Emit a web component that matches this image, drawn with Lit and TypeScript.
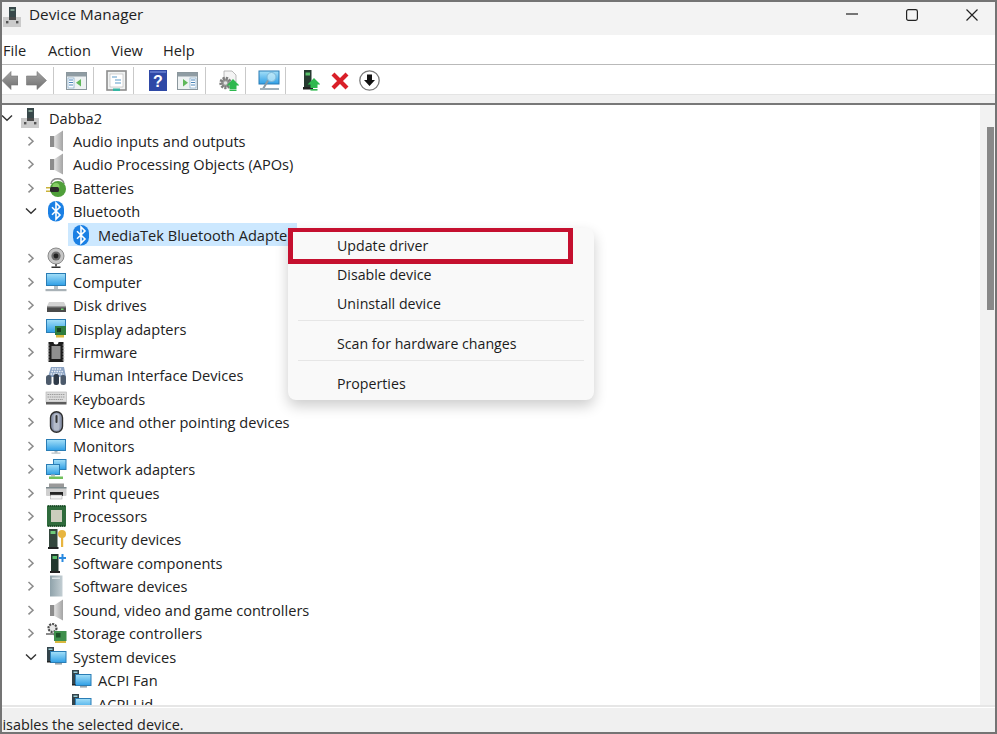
import { LitElement, html, css, svg } from "lit";
import { customElement } from "lit/decorators.js";

const ic = (inner: unknown, w = 22, h = 22, vb = `0 0 ${w} ${h}`) =>
  html`<svg class="ic" width=${w} height=${h} viewBox=${vb}>${inner}</svg>`;

const defs = svg`<defs>
<linearGradient id="scr" x1="0" y1="0" x2="0" y2="1"><stop offset="0" stop-color="#a5e0f8"/><stop offset="1" stop-color="#2f9fe6"/></linearGradient>
<linearGradient id="spk" x1="0" y1="0" x2="1" y2="0"><stop offset="0" stop-color="#e0e0e0"/><stop offset="1" stop-color="#a4a4a4"/></linearGradient>
<linearGradient id="arr" x1="0" y1="0" x2="0" y2="1"><stop offset="0" stop-color="#a4a4a4"/><stop offset="1" stop-color="#6f6f6f"/></linearGradient>
<linearGradient id="twr" x1="0" y1="0" x2="1" y2="0"><stop offset="0" stop-color="#8fa2aa"/><stop offset="1" stop-color="#c3ced3"/></linearGradient>
</defs>`;

const computer = () => ic(svg`
  <rect x="6" y="0" width="7" height="11" fill="#38484a"/><rect x="7.5" y="2" width="4" height="2" fill="#7d9a8e"/>
  <rect x="0" y="10" width="18" height="10" fill="#cbcbcb"/><rect x="6" y="10" width="7" height="3" fill="#4a4a4a"/>
  <rect x="3" y="14" width="2.4" height="2.4" fill="#555"/><rect x="13" y="14" width="2.4" height="2.4" fill="#555"/>`, 18, 20);

const speaker = () => ic(svg`
  <rect x="5" y="6" width="4.5" height="11" fill="#8c8c8c"/>
  <polygon points="9.5,6 18,0.5 18,21.5 9.5,17" fill="url(#spk)"/>`);

const bluetooth = () => ic(svg`
  <rect x="3" y="1" width="16" height="20.5" rx="8" fill="#1b80e4"/>
  <path d="M7 7.2 15 15l-4 4V3l4 4-8 7.8" fill="none" stroke="#fff" stroke-width="1.6"/>`);

const monitorShape = (y: number, h: number) => svg`
  <rect x="1.5" y=${y} width="19" height=${h} fill="url(#scr)" stroke="#2a7db5"/>`;

const icons: Record<string, () => unknown> = {
  speaker,
  bluetooth,
  battery: () => ic(svg`
    <path d="M6 7 C7 0 18 0 19 7" fill="none" stroke="#8a8a8a" stroke-width="1.5"/>
    <circle cx="13" cy="12" r="8" fill="#4f9f3a"/><circle cx="11" cy="9.5" r="3.5" fill="#86cf66"/>
    <rect x="5" y="10" width="9" height="5" rx="1.5" fill="#2a2a2a"/>
    <rect x="1" y="10" width="4" height="1.5" fill="#c9b23a"/><rect x="1" y="13.5" width="4" height="1.5" fill="#c9b23a"/>`),
  camera: () => ic(svg`
    <circle cx="11" cy="9" r="8" fill="#c6c6c6" stroke="#8a8a8a"/><circle cx="11" cy="9" r="4.6" fill="#6a6a6a"/><circle cx="11" cy="9" r="2.4" fill="#222"/>
    <rect x="10" y="17" width="2" height="2.5" fill="#666"/><rect x="6.5" y="19.5" width="9" height="1.5" fill="#333"/>`),
  computer: () => ic(svg`
    ${monitorShape(2.5, 12)}<rect x="9" y="15" width="4" height="3" fill="#b8c0c4"/>
    <rect x="0.5" y="18" width="21" height="2.2" fill="#a9b2b7"/>`),
  disk: () => ic(svg`
    <polygon points="4,8 19,8 21,12 2,12" fill="#d2d2d2"/><rect x="2" y="12" width="19" height="6" fill="#4a4a4a"/>
    <rect x="2" y="12" width="19" height="1.4" fill="#9a9a9a"/><rect x="16" y="14.5" width="2.5" height="1.5" fill="#6fd06f"/>`),
  display: () => ic(svg`
    ${monitorShape(1.5, 13)}<rect x="10" y="8" width="11" height="9" fill="#2f7d3e"/>
    <rect x="12" y="10" width="4" height="4" fill="#173f1f"/><rect x="11" y="17" width="8" height="2.5" fill="#d9b93e"/>`),
  firmware: () => ic(svg`
    <path d="M3.5 1h5a2.5 2.5 0 0 0 5 0h5v20h-15z" fill="#1d1d1d"/>
    <rect x="6.5" y="5" width="9" height="13" fill="#8f8f8f"/>
    <path d="M2.5 4h2M2.5 7h2M2.5 10h2M2.5 13h2M2.5 16h2M2.5 19h2M17.5 4h2M17.5 7h2M17.5 10h2M17.5 13h2M17.5 16h2M17.5 19h2" stroke="#bbb" stroke-width="1"/>`),
  hid: () => ic(svg`
    <polygon points="3,13 6,3 19,3 21,13" fill="#8da4c4"/>
    <path d="M7 5h10M6.4 7.5h11.5M5.6 10h13" stroke="#e8eef5" stroke-width="1.3" stroke-dasharray="1.6 .9"/>
    <rect x="1" y="11" width="5.5" height="10" rx="2.5" fill="#4c5a6b"/><rect x="8.5" y="10" width="5.5" height="11" rx="2.5" fill="#2f3a48"/><rect x="15.5" y="11" width="5.5" height="10" rx="2.5" fill="#4c5a6b"/>`),
  keyboard: () => ic(svg`
    <rect x="1" y="4" width="20.5" height="10" fill="#dcdcdc" stroke="#b0b0b0" stroke-width=".6"/>
    <path d="M2.5 6.5h17.5M2.5 9h17.5M4 11.5h14" stroke="#9c9c9c" stroke-width="1.2" stroke-dasharray="1.5 .7"/>
    <rect x="1" y="14" width="20.5" height="2.5" fill="#5c5c5c"/>`),
  mouse: () => ic(svg`
    <rect x="5.5" y="0.8" width="12" height="20.4" rx="6" fill="#8e97ad" stroke="#2d2d2d" stroke-width="1.4"/>
    <rect x="8.5" y="2.5" width="6" height="17" rx="3" fill="#b5bcca"/><rect x="10.5" y="4" width="2" height="8" rx="1" fill="#333"/>`),
  monitor: () => ic(svg`
    ${monitorShape(4.5, 11)}<rect x="9.5" y="16" width="3" height="1.6" fill="#a8b4ba"/><rect x="6.5" y="17.6" width="9" height="1" fill="#a8b4ba"/>`),
  network: () => ic(svg`
    <rect x="8.5" y="1.5" width="12.5" height="10" fill="url(#scr)" stroke="#2a7db5"/>
    <rect x="1.5" y="6.5" width="13" height="10" fill="url(#scr)" stroke="#2a7db5"/>
    <rect x="6" y="16.5" width="4" height="2" fill="#b8c0c4"/><rect x="4" y="18.5" width="14" height="2.5" fill="#72c05c"/>`),
  printer: () => ic(svg`
    <rect x="4" y="1.5" width="15" height="4" fill="#9a9a9a"/><rect x="1" y="5" width="20.5" height="9" rx="1" fill="#cfcfcf"/>
    <rect x="1" y="5" width="20.5" height="1.5" fill="#7d8a8e"/><rect x="5" y="10" width="13" height="4" fill="#222"/>
    <rect x="5.5" y="13" width="11.5" height="4" fill="#f2f2f2" stroke="#999" stroke-width=".5"/>`),
  cpu: () => ic(svg`
    <rect x="2" y="0.5" width="19" height="21" fill="#2f6b3c"/>
    <path d="M3 1h17M3 21h17" stroke="#14401f" stroke-width="1.6" stroke-dasharray="1.2 .8"/>
    <rect x="6" y="5" width="11" height="12" fill="#cbcdbd"/>`),
  security: () => ic(svg`
    <rect x="4" y="1" width="8.5" height="18" fill="#33463c"/><rect x="5.5" y="3" width="5" height="3" fill="#6ecb7a"/>
    <rect x="3" y="19" width="10.5" height="2" fill="#222"/>
    <circle cx="17" cy="6" r="4" fill="#e8b53f"/><rect x="16" y="9" width="2.2" height="10" fill="#e8b53f"/>`),
  swcomp: () => ic(svg`
    <rect x="6" y="2" width="7.5" height="17" fill="#22382e"/><rect x="7.5" y="4" width="4.5" height="3" fill="#58c06a"/>
    <rect x="5" y="19" width="10" height="2" fill="#222"/>
    <path d="M17.5 2v8M14 6h7" stroke="#2a8ae0" stroke-width="2"/>`),
  swdev: () => ic(svg`
    <rect x="5" y="0.5" width="12.5" height="21" fill="url(#twr)"/><rect x="7" y="2.5" width="8" height="1.5" fill="#dbe3e6"/>`),
  storage: () => ic(svg`
    <circle cx="7.5" cy="6" r="4" fill="#e8e8e8" stroke="#4d4d4d" stroke-width="2.2" stroke-dasharray="2 1"/>
    <path d="M1 12h8l2 5" fill="none" stroke="#666" stroke-width="1.4"/>
    <rect x="9" y="9" width="12.5" height="10" fill="#3f8f4c"/><rect x="11" y="11" width="4.5" height="4.5" fill="#1c4f26"/>
    <rect x="10" y="19" width="11" height="2" fill="#d9b93e"/>`),
  system: () => ic(svg`
    <rect x="2" y="1" width="7" height="15" fill="#33434a"/><rect x="3.5" y="2.5" width="4" height="1.5" fill="#9ccfd8"/>
    <rect x="5.5" y="5.5" width="15.5" height="11" fill="url(#scr)" stroke="#2a7db5"/>
    <rect x="10" y="17" width="7" height="1.6" fill="#9aa6ad"/><rect x="2" y="15" width="3.5" height="1.5" fill="#222"/>`),
};

const chevR = html`<svg class="chev" width="10" height="12" viewBox="0 0 10 12"><path d="M2.5 2 7 6.2 2.5 10.4" fill="none" stroke="#8c8c8c" stroke-width="1.5"/></svg>`;
const chevD = html`<svg class="chev" width="12" height="10" viewBox="0 0 12 10"><path d="M1 2.5 6 7.3l5-4.8" fill="none" stroke="#333" stroke-width="1.4"/></svg>`;

type Row = { t: string; i: string; l: number; o?: "r" | "d"; sel?: boolean };
const rows: Row[] = [
  { t: "Audio inputs and outputs", i: "speaker", l: 1, o: "r" },
  { t: "Audio Processing Objects (APOs)", i: "speaker", l: 1, o: "r" },
  { t: "Batteries", i: "battery", l: 1, o: "r" },
  { t: "Bluetooth", i: "bluetooth", l: 1, o: "d" },
  { t: "MediaTek Bluetooth Adapter", i: "bluetooth", l: 2, sel: true },
  { t: "Cameras", i: "camera", l: 1, o: "r" },
  { t: "Computer", i: "computer", l: 1, o: "r" },
  { t: "Disk drives", i: "disk", l: 1, o: "r" },
  { t: "Display adapters", i: "display", l: 1, o: "r" },
  { t: "Firmware", i: "firmware", l: 1, o: "r" },
  { t: "Human Interface Devices", i: "hid", l: 1, o: "r" },
  { t: "Keyboards", i: "keyboard", l: 1, o: "r" },
  { t: "Mice and other pointing devices", i: "mouse", l: 1, o: "r" },
  { t: "Monitors", i: "monitor", l: 1, o: "r" },
  { t: "Network adapters", i: "network", l: 1, o: "r" },
  { t: "Print queues", i: "printer", l: 1, o: "r" },
  { t: "Processors", i: "cpu", l: 1, o: "r" },
  { t: "Security devices", i: "security", l: 1, o: "r" },
  { t: "Software components", i: "swcomp", l: 1, o: "r" },
  { t: "Software devices", i: "swdev", l: 1, o: "r" },
  { t: "Sound, video and game controllers", i: "speaker", l: 1, o: "r" },
  { t: "Storage controllers", i: "storage", l: 1, o: "r" },
  { t: "System devices", i: "system", l: 1, o: "d" },
  { t: "ACPI Fan", i: "system", l: 2 },
  { t: "ACPI Lid", i: "system", l: 2 },
];

const tbWindow = (right: boolean) => ic(svg`
  <rect x="0.5" y="0.5" width="20" height="17" fill="#eef2f3" stroke="#8b979d"/><rect x="1" y="1" width="19" height="3.5" fill="#8f9ca3"/>
  ${right
    ? svg`<rect x="13" y="6" width="6" height="10" fill="#fff" stroke="#6d9bc4" stroke-width=".6"/><path d="M14 8h4M14 10.5h4M14 13h4" stroke="#4d86b8"/><polygon points="6,7 6,14.5 11,10.7" fill="#5fb85a"/>`
    : svg`<rect x="2" y="6" width="6" height="10" fill="#fff" stroke="#6d9bc4" stroke-width=".6"/><path d="M3 8h4M3 10.5h4M3 13h4" stroke="#4d86b8"/><polygon points="15,7 15,14.5 10,10.7" fill="#5fb85a"/>`}`, 21, 18);

const upArrow = (x: number, y: number) => svg`
  <polygon points="${x},${y} ${x + 6.5},${y + 6.5} ${x + 3.5},${y + 6.5} ${x + 3.5},${y + 10} ${x - 3.5},${y + 10} ${x - 3.5},${y + 6.5} ${x - 6.5},${y + 6.5}" fill="#2fb84f"/>`;

@customElement("app-root")
export class AppRoot extends LitElement {
  static styles = css`
    :host { display: block; position: relative; width: 997px; height: 734px; overflow: hidden; background: #fff;
      font-family: "Open Sans", "Noto Sans", sans-serif; font-size: 14.6px; color: #222; }
    .win { box-sizing: border-box; width: 997px; height: 734px; border: 2px solid #747474;
      display: flex; flex-direction: column; }
    svg { display: block; flex: none; overflow: hidden; }
    .title { height: 33px; background: #f3f3f3; display: flex; align-items: center; padding: 0 17px 0 1px; flex: none; }
    .title .name { margin-left: 8px; font-size: 15.3px; padding-bottom: 9px; color: #1f1f1f; }
    .title .ic { margin-top: -4px; }
    .ctl { margin-left: auto; display: flex; gap: 48px; padding-bottom: 3px; }
    .menubar { height: 29px; flex: none; display: grid; grid-template-columns: 45px 63px 52px auto; padding-left: 1px; align-items: center;
      border-bottom: 1.5px solid #b9b9b9; }
    .toolbar { height: 29px; flex: none; display: flex; background: #fff; }
    .grp { box-sizing: border-box; display: flex; align-items: center; margin-top: 2px; height: 27px; border-right: 1px solid #c9c9c9; }
    .g1 { width: 52px; gap: 8px; }
    .g40 { width: 40px; padding-left: 12px; }
    .g2 { width: 72px; padding-left: 15px; gap: 10px; }
    .g3 { border: none; padding-left: 16px; gap: 10.5px; width: 120px; }
    .strip { height: 9px; flex: none; background: #f0f0f0; border-top: 1px solid #e4e4e4; box-sizing: border-box; }
    .rule { height: 2px; flex: none; background: #787878; }
    .body { flex: 1; min-height: 0; display: flex; }
    .tree { flex: 1; min-width: 0; overflow: hidden; padding-top: 0.9px; }
    .row { height: 23.44px; display: flex; align-items: center; white-space: nowrap; }
    .tw { width: 10px; flex: none; display: flex; justify-content: center; }
    .cell { display: flex; align-items: center; height: 23px; margin-left: 7px; padding-left: 2px; }
    .cell .ic { margin-right: 6px; }
    .root .ic { margin-right: 10px; }
    .sel { background: #cce8ff; width: 229px; box-sizing: border-box; overflow: hidden; }
    .l1 { padding-left: 24px; }
    .l2 { padding-left: 49px; }
    .scroll { width: 15px; flex: none; background: #f2f2f2; padding: 22px 1px 0 7px; box-sizing: border-box; }
    .thumb { height: 183px; background: #898989; }
    .hline { height: 3px; flex: none; background: #e6e6e6; border-bottom: 1px solid #fff; box-sizing: border-box; }
    .status { height: 24px; flex: none; background: #f0f0f0; overflow: hidden; display: flex; align-items: center; padding-top: 9px; box-sizing: border-box; font-size: 14.4px; }
    .status span { margin-left: -10px; white-space: nowrap; }
    .menu { position: absolute; left: 288px; top: 228px; width: 306px; height: 172px; box-sizing: border-box; padding-top: 3.6px;
      background: #f9f9f9; border-radius: 8px; box-shadow: 0 6px 14px rgba(0,0,0,.2); font-size: 14.2px; }
    .item { height: 28.7px; display: flex; align-items: center; padding-left: 49px; color: #1c1c1c; }
    .sep { height: 1px; background: #e6e6e6; margin: 2.5px 10px 8px; }
    .mark { position: absolute; left: 0; top: 0; width: 285px; height: 36px; box-sizing: border-box;
      border: 5px solid #c5102f; border-top-width: 4px; pointer-events: none; }
  `;

  render() {
    return html`<div class="win">
      <svg width="0" height="0" style="position:absolute">${defs}</svg>
      <div class="title">
        ${computer()}
        <span class="name">Device Manager</span>
        <div class="ctl">
          ${ic(svg`<path d="M0 5h12" stroke="#222" stroke-width="1.2"/>`, 12, 12)}
          ${ic(svg`<rect x=".6" y=".6" width="10.8" height="10.8" rx="1.8" fill="none" stroke="#222" stroke-width="1.2"/>`, 12, 12)}
          ${ic(svg`<path d="M.5.5l11 11M11.5.5l-11 11" stroke="#222" stroke-width="1.2"/>`, 12, 12)}
        </div>
      </div>
      <div class="menubar"><span>File</span><span>Action</span><span>View</span><span>Help</span></div>
      <div class="toolbar">
        <div class="grp g1">
          ${ic(svg`<polygon points="5,9.5 14,0.5 14,5 21,5 21,14 14,14 14,18.5" fill="url(#arr)" stroke="#777" stroke-width=".6"/>`, 16, 19, "5 0 16 19")}
          ${ic(svg`<polygon points="0.5,5 11,5 11,0.5 20.5,9.5 11,18.5 11,14 0.5,14" fill="url(#arr)" stroke="#777" stroke-width=".6"/>`, 21, 19)}
        </div>
        <div class="grp g40">${tbWindow(false)}</div>
        <div class="grp g40">${ic(svg`
          <rect x="1" y="1" width="19" height="19" fill="#f1f3f3" stroke="#8d8d8d" stroke-width="1.6"/>
          <rect x="4" y="4" width="13" height="13" fill="#fff" stroke="#b5b5b5" stroke-width=".6"/>
          <path d="M6 7h5M9 10h6M9 13h6" stroke="#5d9cc9" stroke-width="1.2"/><rect x="7" y="18.5" width="7" height="2.5" fill="#35b6a3"/>`, 21, 21)}</div>
        <div class="grp g2">
          ${ic(svg`<rect width="18" height="21" fill="#2f49a6"/><rect x="1" y="1" width="16" height="2" fill="#5c74c7"/><text x="9" y="16.5" text-anchor="middle" font-family="Liberation Sans" font-weight="700" font-size="16" fill="#fff">?</text>`, 18, 21)}
          ${tbWindow(true)}
        </div>
        <div class="grp g40">${ic(svg`
          <path d="M6 1h8l4 4v7H6z" fill="#f4f4f4" stroke="#aaa" stroke-width=".8"/>
          <circle cx="7.5" cy="13" r="4.5" fill="#9a9a9a" stroke="#7e7e7e" stroke-width="3.4" stroke-dasharray="2 1"/>
          <circle cx="7.5" cy="13" r="1.8" fill="#e2e2e2"/>
          ${upArrow(15, 9)}<rect x="11.5" y="19.5" width="7" height="1.5" fill="#2fb84f"/>`, 21, 21)}</div>
        <div class="grp g40">${ic(svg`
          <rect x="1" y="1" width="20" height="13" fill="url(#scr)" stroke="#2a7db5"/>
          <circle cx="13.5" cy="7" r="4.5" fill="#c8ecfa" fill-opacity=".7" stroke="#7db7d8"/>
          <path d="M10 10.5 5 19" stroke="#8a9aa4" stroke-width="2"/><rect x="2" y="18" width="19" height="2" fill="#9fb0ba"/>`, 22, 21)}</div>
        <div class="grp g3">
          ${ic(svg`
            <rect x="2" y="0" width="7.5" height="17" fill="#263b30"/><rect x="3.5" y="2.5" width="4.5" height="3" fill="#58c06a"/>
            <rect x="1" y="17" width="10" height="2.5" fill="#222"/>${upArrow(12, 8)}<rect x="8.5" y="19" width="7" height="1.6" fill="#2fb84f"/>`, 18, 21)}
          ${ic(svg`<path d="M2 2 16 16M16 2 2 16" stroke="#d91f28" stroke-width="4.2"/>`, 18, 18)}
          ${ic(svg`<circle cx="10.5" cy="10.5" r="9.7" fill="#fff" stroke="#7b7b7b" stroke-width="1.3"/>
            <polygon points="8,4.5 13,4.5 13,10 16,10 10.5,16 5,10 8,10" fill="#111"/>`, 21, 21)}
        </div>
      </div>
      <div class="strip"></div>
      <div class="rule"></div>
      <div class="body">
        <div class="tree">
          <div class="row root">
            <span class="tw">${chevD}</span>
            <span class="cell">${computer()}Dabba2</span>
          </div>
          ${rows.map((r) => html`<div class="row l${r.l}">
            <span class="tw">${r.o === "r" ? chevR : r.o === "d" ? chevD : ""}</span>
            <span class="cell ${r.sel ? "sel" : ""}">${icons[r.i]()}${r.t}</span>
          </div>`)}
        </div>
        <div class="scroll"><div class="thumb"></div></div>
      </div>
      <div class="hline"></div>
      <div class="status"><span>Disables the selected device.</span></div>
    </div>
    <div class="menu">
      <div class="item">Update driver</div>
      <div class="item">Disable device</div>
      <div class="item">Uninstall device</div>
      <div class="sep"></div>
      <div class="item">Scan for hardware changes</div>
      <div class="sep"></div>
      <div class="item">Properties</div>
      <div class="mark"></div>
    </div>`;
  }
}
